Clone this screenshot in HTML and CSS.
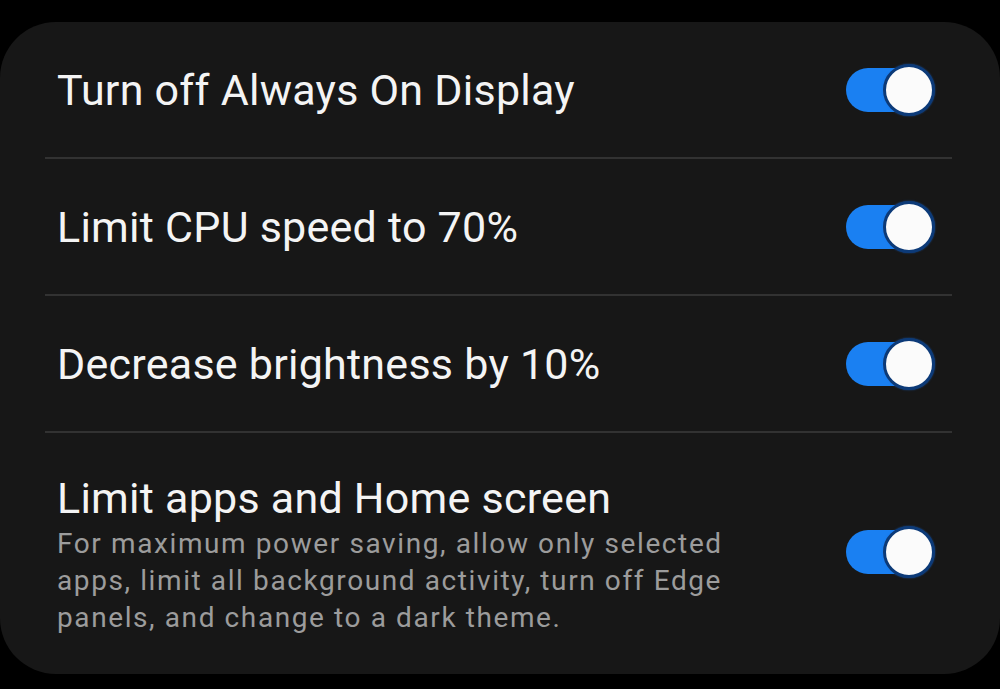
FILE: index.html
```html
<!DOCTYPE html>
<html lang="en">
<head>
<meta charset="utf-8">
<title>Power saving</title>
<link rel="stylesheet" href="styles.css">
</head>
<body>
<div class="card">
  <div class="row">
    <div class="text"><div class="title">Turn off Always On Display</div></div>
    <div class="toggle"><span class="track"></span><span class="thumb"></span></div>
  </div>
  <div class="row">
    <div class="text"><div class="title">Limit CPU speed to 70%</div></div>
    <div class="toggle"><span class="track"></span><span class="thumb"></span></div>
  </div>
  <div class="row">
    <div class="text"><div class="title">Decrease brightness by 10%</div></div>
    <div class="toggle"><span class="track"></span><span class="thumb"></span></div>
  </div>
  <div class="row row-last">
    <div class="text">
      <div class="title">Limit apps and Home screen</div>
      <div class="sub">For maximum power saving, allow only selected apps, limit all background activity, turn off Edge panels, and change to a dark theme.</div>
    </div>
    <div class="toggle"><span class="track"></span><span class="thumb"></span></div>
  </div>
</div>
</body>
</html>
```
FILE: styles.css
```css
html, body {
  margin: 0;
  padding: 0;
  background: #000;
  height: 689px;
  overflow: hidden;
}
body {
  font-family: Roboto, "Noto Sans", sans-serif;
}
.card {
  margin-top: 22px;
  width: 1000px;
  height: 652px;
  background: #171717;
  border-radius: 56px;
  display: flex;
  flex-direction: column;
}
.row {
  margin: 0 48px 0 45px;
  padding: 0 17px 0 12px;
  height: 137px;
  box-sizing: border-box;
  border-bottom: 2px solid #323232;
  display: flex;
  align-items: center;
  justify-content: space-between;
}
.row-last {
  border-bottom: none;
  height: 240px;
  align-items: flex-start;
  padding-top: 39px;
}
.row-last .toggle {
  margin-top: 54px;
}
.title {
  color: #f4f4f4;
  font-size: 43px;
  line-height: 52px;
  letter-spacing: 0.25px;
}
.sub {
  color: #9c9c9c;
  font-size: 28px;
  line-height: 37px;
  letter-spacing: 1.6px;
  width: 690px;
  margin-top: 1px;
}
.toggle {
  position: relative;
  width: 89px;
  height: 52px;
  flex: none;
}
.track {
  position: absolute;
  left: 0;
  top: 4px;
  width: 76px;
  height: 44px;
  border-radius: 22px;
  background: #1a80f2;
}
.thumb {
  position: absolute;
  right: 0;
  top: 0;
  width: 46px;
  height: 46px;
  border-radius: 50%;
  background: #fbfbfb;
  border: 3px solid #0c3a78;
  box-shadow: 0 0 2px rgba(30, 110, 220, 0.6);
}
```
